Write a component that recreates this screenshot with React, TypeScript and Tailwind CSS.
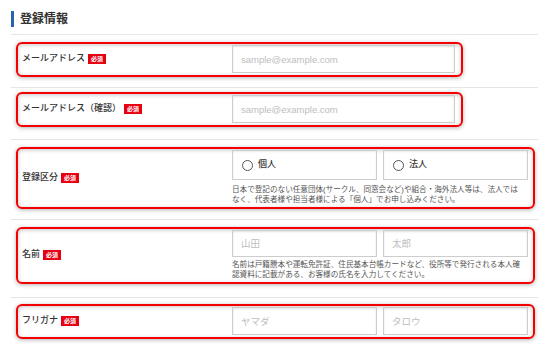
import React from "react";

// Red "必須" badge shown after every label
const Required: React.FC = () => (
    <span className="ml-[3px] inline-flex h-[10px] w-[18px] items-center justify-center bg-[#e60012] text-[6px] leading-none font-bold text-white">
        必須
    </span>
);

interface FieldRowProps {
    label: string;
    wide?: boolean;
    rowClass: string;
    boxClass: string;
    children: React.ReactNode;
}

// One form row: gray divider below, red highlight box around label + control
const FieldRow: React.FC<FieldRowProps> = ({ label, wide = true, rowClass, boxClass, children }) => (
    <div className={`border-b border-[#e6e6e6] pl-[5px] ${rowClass}`}>
        <div
            className={`flex items-center rounded-[6px] border-2 border-[#f40000] shadow-[0_1px_4px_rgba(0,0,0,0.3),inset_0_1px_4px_rgba(0,0,0,0.22)] ${wide ? "w-[519px]" : "w-[447px]"} ${boxClass}`}
        >
            <div className="flex w-[214px] shrink-0 items-center pl-[4px] text-[9px] font-medium text-[#333]">
                <span>{label}</span>
                <Required />
            </div>
            <div className="flex flex-col">{children}</div>
        </div>
    </div>
);

const TextInput: React.FC<{ placeholder: string; className?: string }> = ({ placeholder, className = "" }) => (
    <input
        type="text"
        placeholder={placeholder}
        className={`border border-[#cdcdcd] bg-white px-[8px] text-[9.5px] text-[#333] shadow-[inset_0_1px_2px_rgba(0,0,0,0.12)] outline-none placeholder:text-[#bdbdbd] ${className}`}
    />
);

const RadioOption: React.FC<{ label: string }> = ({ label }) => (
    <label className="flex h-[30px] w-[145px] cursor-pointer items-center border border-[#cdcdcd] bg-white pl-[9px] shadow-[inset_0_1px_2px_rgba(0,0,0,0.08)]">
        <span className="h-[11px] w-[11px] rounded-full border border-[#555] bg-white"></span>
        <span className="ml-[5px] text-[9px] font-medium text-[#333]">{label}</span>
    </label>
);

const Note: React.FC<{ children: React.ReactNode }> = ({ children }) => (
    <p className="w-[296px] text-[7.6px] leading-[10px] whitespace-nowrap text-[#555]">{children}</p>
);

export default function App() {
    return (
        <div className="min-h-screen bg-white font-['Liberation_Sans','Noto_Sans_CJK_JP',sans-serif]">
            <div className="w-[538px] pt-[11px] pl-[11px]">
                <h2 className="flex h-[16px] items-center border-l-[3px] border-[#2565ad] pl-[6px] text-[12px] font-bold text-[#333]">
                    登録情報
                </h2>

                <div className="mt-[7px] border-t border-[#e6e6e6]">
                    <FieldRow label="メールアドレス" wide={false} rowClass="pt-[7px] pb-[10px]" boxClass="pt-[1px] pb-[2px]">
                        <TextInput placeholder="sample@example.com" className="h-[28px] w-[223px]" />
                    </FieldRow>

                    <FieldRow label="メールアドレス（確認）" wide={false} rowClass="pt-[4px] pb-[12px]" boxClass="pt-[1px] pb-[2px]">
                        <TextInput placeholder="sample@example.com" className="h-[28px] w-[223px]" />
                    </FieldRow>

                    <FieldRow label="登録区分" rowClass="pt-[7px] pb-[10px]" boxClass="pt-[1px] pb-[2px]">
                        <div className="flex gap-[6px]">
                            <RadioOption label="個人" />
                            <RadioOption label="法人" />
                        </div>
                        <div className="mt-[5px]">
                            <Note>
                                日本で登記のない任意団体(サークル、同窓会など)や組合・海外法人等は、法人では
                                <br />
                                なく、代表者様や担当者様による「個人」でお申し込みください。
                            </Note>
                        </div>
                    </FieldRow>

                    <FieldRow label="名前" rowClass="pt-[7px] pb-[13px]" boxClass="pt-[1px] pb-[2px]">
                        <div className="flex gap-[6px]">
                            <TextInput placeholder="山田" className="h-[27px] w-[145px]" />
                            <TextInput placeholder="太郎" className="h-[27px] w-[145px]" />
                        </div>
                        <div className="mt-[3px]">
                            <Note>
                                名前は戸籍謄本や運転免許証、住民基本台帳カードなど、役所等で発行される本人確
                                <br />
                                認資料に記載がある、お客様の氏名を入力してください。
                            </Note>
                        </div>
                    </FieldRow>

                    <FieldRow label="フリガナ" rowClass="pt-[6px] pb-[10px]" boxClass="pt-[1px] pb-[2px]">
                        <div className="flex gap-[6px]">
                            <TextInput placeholder="ヤマダ" className="h-[28px] w-[145px]" />
                            <TextInput placeholder="タロウ" className="h-[28px] w-[145px]" />
                        </div>
                    </FieldRow>
                </div>
            </div>
        </div>
    );
}
